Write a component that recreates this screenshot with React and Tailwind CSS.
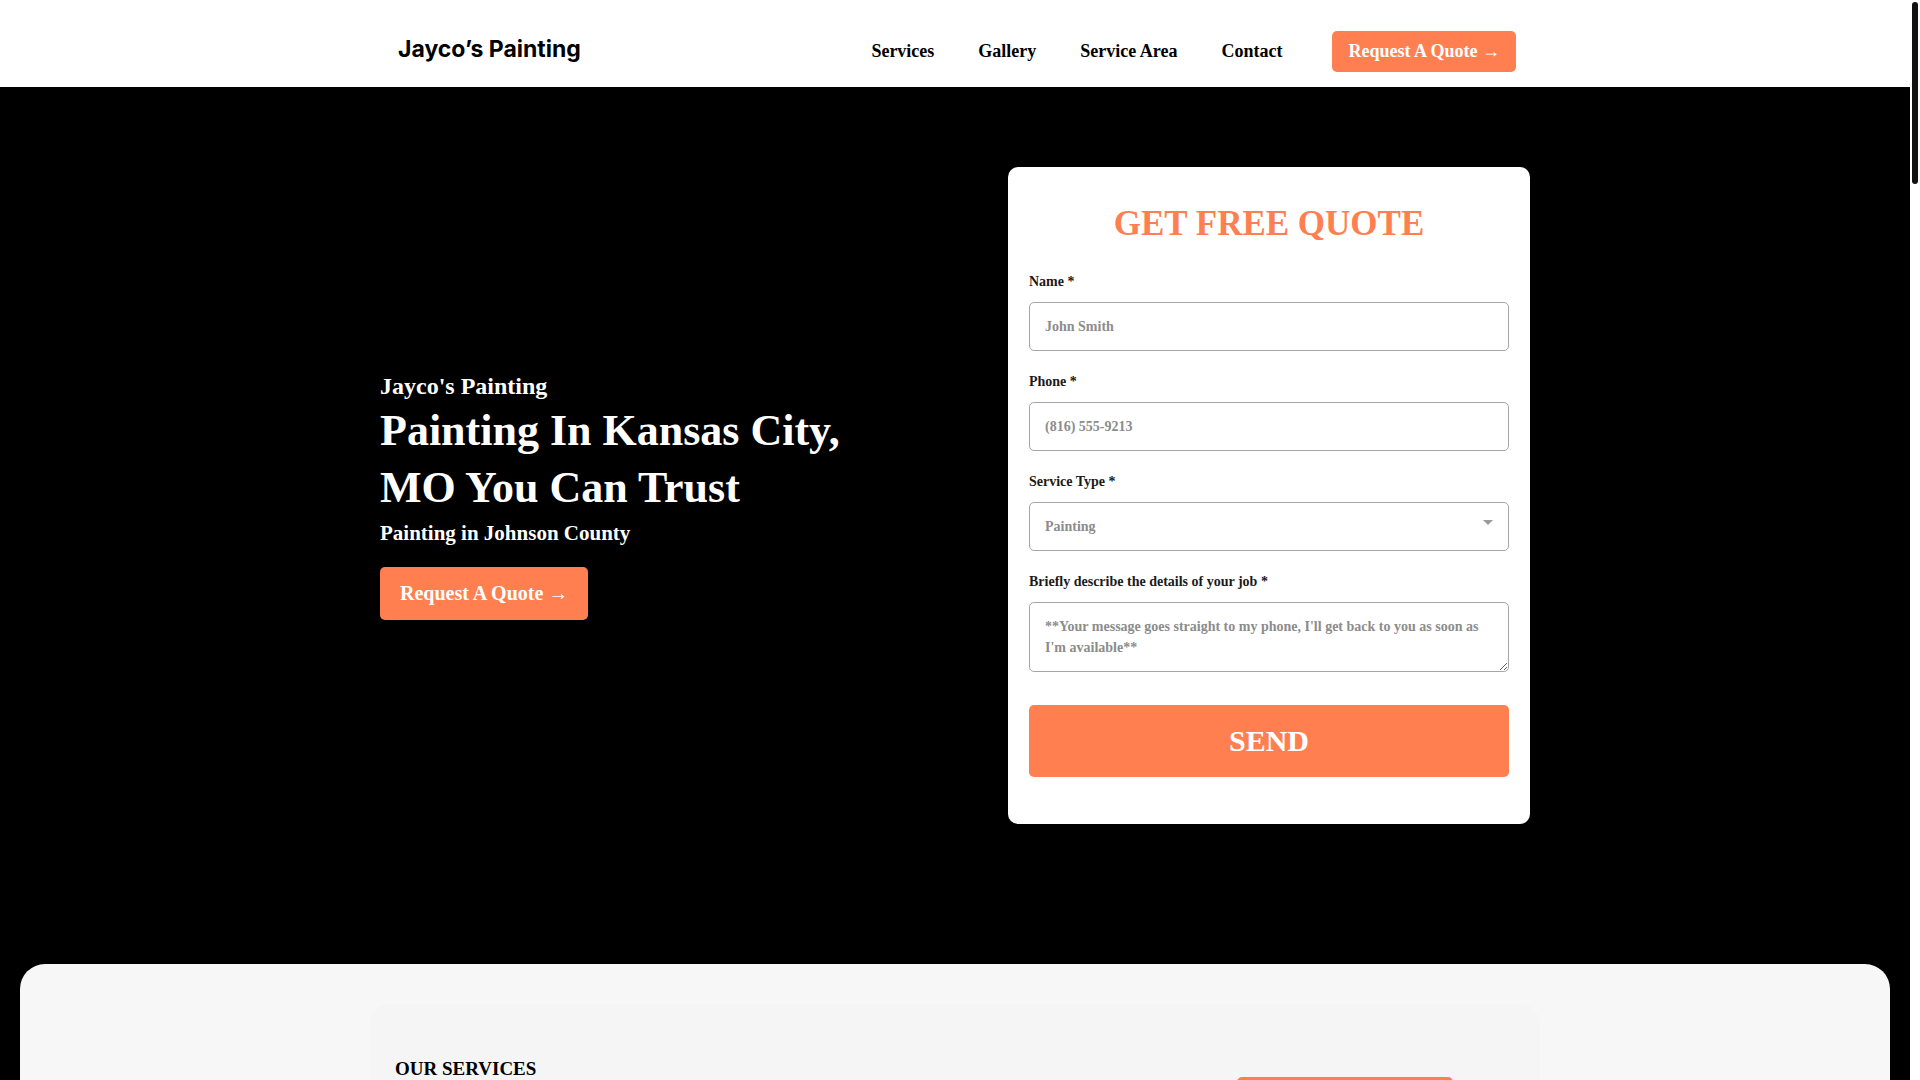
const navLinks = [
  { label: 'Services', href: '#services' },
  { label: 'Gallery', href: '#gallery' },
  { label: 'Service Area', href: '#service-area' },
  { label: 'Contact', href: '#contact' },
];

const fieldClass =
  'block w-full rounded-[5px] border border-[#a6a6a6] bg-white px-[15px] py-[13px] text-[14px] leading-[21px] font-bold text-[#8c8c8c] placeholder:text-[#8c8c8c]';

function Header() {
  return (
    <header className="bg-white">
      <div className="mx-auto flex max-w-[1150px] items-start justify-between px-[14px] pt-[31px] pb-[15px]">
        <a href="#home" className="pl-1 font-['Inter',sans-serif] text-[23px] leading-[36px] font-bold text-black">
          Jayco’s Painting
        </a>
        <nav className="flex items-center gap-[50px]">
          <div className="flex gap-[44px]">
            {navLinks.map(link => (
              <a key={link.label} href={link.href} className="text-[18px] leading-[27px] font-bold text-black">
                {link.label}
              </a>
            ))}
          </div>
          <a href="#quote" className="rounded-[5px] bg-[#ff7f50] px-4 py-[7px] text-[18px] leading-[27px] font-bold text-white">
            Request A Quote →
          </a>
        </nav>
      </div>
    </header>
  );
}

function Field({ id, label, children }) {
  return (
    <div className="flex flex-col gap-[10px]">
      <label htmlFor={id} className="text-[14px] leading-[21px] font-bold text-[#1a1a1a]">
        {label} *
      </label>
      {children}
    </div>
  );
}

function QuoteForm() {
  return (
    <form id="quote" className="w-[522px] shrink-0 rounded-[10px] bg-white px-[21px] pt-[33px] pb-[47px]">
      <h2 className="text-center text-[35px] leading-[47px] font-bold text-[#ff7f50]">GET FREE QUOTE</h2>
      <div className="mt-6 flex flex-col gap-5">
        <Field id="name" label="Name">
          <input id="name" type="text" placeholder="John Smith" className={fieldClass} />
        </Field>
        <Field id="phone" label="Phone">
          <input id="phone" type="tel" placeholder="(816) 555-9213" className={fieldClass} />
        </Field>
        <Field id="service" label="Service Type">
          <div className="relative">
            <select id="service" className={`${fieldClass} appearance-none`}>
              <option>Painting</option>
            </select>
            <svg className="pointer-events-none absolute top-[18px] right-4 h-[5px] w-[10px]" viewBox="0 0 10 5" fill="#999999">
              <path d="M0 0h10L5 5z" />
            </svg>
          </div>
        </Field>
        <Field id="details" label="Briefly describe the details of your job">
          <textarea
            id="details"
            rows={2}
            placeholder="**Your message goes straight to my phone, I'll get back to you as soon as I'm available**"
            className={`${fieldClass} resize overflow-auto`}
          />
        </Field>
      </div>
      <button type="submit" className="mt-[33px] w-full rounded-[5px] bg-[#ff7f50] py-[14px] text-[30px] leading-[44px] font-bold text-white">
        SEND
      </button>
    </form>
  );
}

function Hero() {
  return (
    <section className="bg-black pt-20 pb-[140px]">
      <div className="mx-auto flex max-w-[1150px] items-center justify-between">
        <div className="max-w-[500px]">
          <p className="text-[24px] leading-[31px] font-bold text-white">Jayco's Painting</p>
          <h1 className="text-[44px] leading-[57px] font-bold text-white">Painting In Kansas City, MO You Can Trust</h1>
          <p className="text-[21px] leading-[35px] font-bold text-white">Painting in Johnson County</p>
          <a href="#quote" className="mt-4 inline-block rounded-[5px] bg-[#ff7f50] px-5 py-[11px] align-top text-[20px] leading-[31px] font-bold text-white">
            Request A Quote →
          </a>
        </div>
        <QuoteForm />
      </div>
    </section>
  );
}

function Services() {
  return (
    <section id="services" className="bg-black px-5">
      <div className="rounded-[25px] bg-[#f7f7f7] py-10">
        <div className="mx-auto flex max-w-[1170px] items-start justify-between rounded-[20px] bg-[#f5f5f5] pt-[50px] pr-[87px] pb-20 pl-[25px]">
          <h2 className="text-[19px] leading-[30px] font-bold text-black">OUR SERVICES</h2>
          <a href="#quote" className="mt-[23px] rounded-[5px] bg-[#ff7f50] px-6 py-[11px] text-[20px] leading-[31px] font-bold text-white">
            Request A Quote →
          </a>
        </div>
      </div>
    </section>
  );
}

export default function App() {
  return (
    <div className="flex h-screen overflow-hidden bg-white font-['Liberation_Serif',serif]">
      <main className="flex-1 overflow-hidden">
        <Header />
        <Hero />
        <Services />
      </main>
      {/* scroll track */}
      <div className="w-[10px] bg-white px-[2px] pt-[2px]">
        <div className="h-[182px] rounded-full bg-[#111111]"></div>
      </div>
    </div>
  );
}
